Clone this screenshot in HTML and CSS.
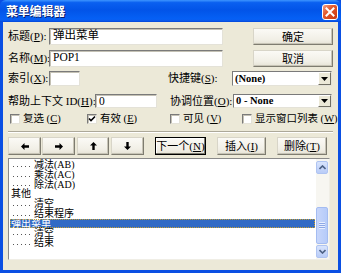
FILE: index.html
```html
<!DOCTYPE html>
<html>
<head>
<meta charset="utf-8">
<link rel="stylesheet" href="styles.css">
</head>
<body>
<div class="win">
  <div class="titlebar">
    <span class="title">菜单编辑器</span>
    <span class="close"><svg width="10" height="10" viewBox="0 0 10 10"><path d="M1.5 1.5 L8.5 8.5 M8.5 1.5 L1.5 8.5" stroke="#fff" stroke-width="2" stroke-linecap="square"/></svg></span>
  </div>
  <div class="body">
    <div class="row r1">
      <span class="lbl l-a">标题(<u>P</u>):</span>
      <span class="input in-long">弹出菜单</span>
      <span class="btn b-ok">确定</span>
    </div>
    <div class="row r2">
      <span class="lbl l-a">名称(<u>M</u>):</span>
      <span class="input in-long">POP1</span>
      <span class="btn b-ok">取消</span>
    </div>
    <div class="row r3">
      <span class="lbl l-a">索引(<u>X</u>):</span>
      <span class="input in-idx"></span>
      <span class="lbl l-key">快捷键(<u>S</u>):</span>
      <span class="combo"><span class="ctext">(None)</span><span class="dd"><svg width="7" height="4" viewBox="0 0 7 4"><path d="M0 0 H7 L3.5 4 Z" fill="#000"/></svg></span></span>
    </div>
    <div class="row r4">
      <span class="lbl l-help">帮助上下文 ID(<u>H</u>):</span>
      <span class="input in-help">0</span>
      <span class="lbl l-pos">协调位置(<u>O</u>):</span>
      <span class="combo c2"><span class="ctext">0 - None</span><span class="dd"><svg width="7" height="4" viewBox="0 0 7 4"><path d="M0 0 H7 L3.5 4 Z" fill="#000"/></svg></span></span>
    </div>
    <div class="row r5">
      <span class="chk k1"><span class="box"></span><span>复选 (<u>C</u>)</span></span>
      <span class="chk k2"><span class="box"><svg width="8" height="8" viewBox="0 0 8 8"><path d="M1 3.5 L3 5.5 L7 1.5" stroke="#000" stroke-width="1.6" fill="none"/></svg></span><span>有效 (<u>E</u>)</span></span>
      <span class="chk k3"><span class="box"></span><span>可见 (<u>V</u>)</span></span>
      <span class="chk k4"><span class="box"></span><span>显示窗口列表 (<u>W</u>)</span></span>
    </div>
    <div class="sep"></div>
    <div class="row r6">
      <span class="btn arr a1"><svg width="8" height="7" viewBox="0 0 8 7"><path d="M0 3.5 L3.5 0 V2.3 H8 V4.7 H3.5 V7 Z" fill="#000"/></svg></span>
      <span class="btn arr a2"><svg width="8" height="7" viewBox="0 0 8 7"><path d="M8 3.5 L4.5 0 V2.3 H0 V4.7 H4.5 V7 Z" fill="#000"/></svg></span>
      <span class="btn arr a3"><svg width="7" height="8" viewBox="0 0 7 8"><path d="M3.5 0 L0 3.5 H2.3 V8 H4.7 V3.5 H7 Z" fill="#000"/></svg></span>
      <span class="btn arr a4"><svg width="7" height="8" viewBox="0 0 7 8"><path d="M3.5 8 L0 4.5 H2.3 V0 H4.7 V4.5 H7 Z" fill="#000"/></svg></span>
      <span class="btn bnext">下一个(<u>N</u>)</span>
      <span class="btn bins">插入(<u>I</u>)</span>
      <span class="btn bdel">删除(<u>T</u>)</span>
    </div>
    <div class="list">
      <div class="items">
        <div class="it"><span class="dots"></span>减法(AB)</div>
        <div class="it"><span class="dots"></span>乘法(AC)</div>
        <div class="it"><span class="dots"></span>除法(AD)</div>
        <div class="it top">其他</div>
        <div class="it"><span class="dots"></span>清空</div>
        <div class="it"><span class="dots"></span>结束程序</div>
        <div class="it top sel">弹出菜单</div>
        <div class="it"><span class="dots"></span>清空</div>
        <div class="it"><span class="dots"></span>结束</div>
      </div>
      <div class="sbar">
        <span class="sbtn"><svg width="7" height="5" viewBox="0 0 7 5"><path d="M0.5 4 L3.5 1 L6.5 4" stroke="#4D6185" stroke-width="1.6" fill="none"/></svg></span>
        <span class="track"></span>
        <span class="thumb"><span class="grip"></span></span>
        <span class="sbtn"><svg width="7" height="5" viewBox="0 0 7 5"><path d="M0.5 1 L3.5 4 L6.5 1" stroke="#4D6185" stroke-width="1.6" fill="none"/></svg></span>
      </div>
    </div>
  </div>
</div>
</body>
</html>
```
FILE: styles.css
```css
* { box-sizing: border-box; }
html, body { margin: 0; padding: 0; }
body {
  width: 341px;
  height: 273px;
  overflow: hidden;
  font-family: "Liberation Serif", "Noto Sans CJK SC", serif;
  font-size: 11px;
  color: #000;
  background: #ECE9D8;
}
u { text-decoration: underline; text-underline-offset: 1px; }
.win {
  width: 341px;
  height: 273px;
  display: flex;
  flex-direction: column;
  background: #0A4FE3;
}
.titlebar {
  height: 22px;
  flex: none;
  display: flex;
  align-items: center;
  padding: 0 3px 0 6px;
  background: linear-gradient(to bottom, #3D95FF 0%, #0A60F0 12%, #0254E8 45%, #0560F5 85%, #0A5DF0 92%, #0346D8 100%);
  border-radius: 6px 6px 0 0;
}
.title {
  color: #fff;
  font-family: "Noto Sans CJK SC", sans-serif;
  font-weight: bold;
  font-size: 12px;
  line-height: 14px;
  letter-spacing: -0.2px;
  text-shadow: 1px 1px 0 #0A1E6C;
  flex: 1;
}
.close {
  width: 16px;
  height: 16px;
  border: 1px solid #fff;
  border-radius: 3px;
  background: linear-gradient(135deg, #F0A08A 0%, #E2582C 40%, #C8360E 100%);
  display: flex;
  align-items: center;
  justify-content: center;
  margin-top: 1px;
}
.body {
  flex: 1;
  margin: 0 3px 3px 3px;
  background: #ECE9D8;
  padding: 0 5px 0 5px;
  display: flex;
  flex-direction: column;
}
.row { display: flex; align-items: center; flex: none; }
.r1 { margin-top: 6px; height: 17px; }
.r2 { margin-top: 5px; height: 17px; }
.r3 { margin-top: 4px; height: 15px; }
.r4 { margin-top: 8px; height: 14px; }
.r5 { margin-top: 5px; height: 11px; }
.r6 { margin-top: 4px; height: 18px; }
.lbl {
  font-size: 11px;
  line-height: 13px;
  white-space: nowrap;
  flex: none;
}
.l-a { width: 41px; }
.l-key { width: 64px; margin-left: 88px; }
.l-help { width: 87px; }
.l-pos { width: 63px; margin-left: 13px; }
.input {
  background: #fff;
  border: 1px solid;
  border-color: #7A7A7A #E4E2D8 #E4E2D8 #7A7A7A;
  box-shadow: inset 1px 1px 0 #C4C1B4;
  height: 100%;
  padding: 0 3px;
  font-size: 11.5px;
  line-height: 13px;
  flex: none;
  white-space: nowrap;
  overflow: hidden;
}
.in-long { width: 174px; }
.in-idx { width: 31px; }
.in-help { width: 62px; }
.combo {
  width: 100px;
  height: 100%;
  background: #fff;
  border: 1px solid;
  border-color: #7A7A7A #E4E2D8 #E4E2D8 #7A7A7A;
  display: flex;
  align-items: center;
  justify-content: space-between;
  flex: none;
  padding-left: 2px;
}
.c2 { width: 99px; }
.ctext { font-size: 10.5px; line-height: 12px; font-weight: bold; font-family: "Liberation Serif", serif; }
.dd {
  width: 13px;
  height: 100%;
  background: #ECE9D8;
  border: 1px solid;
  border-color: #fff #716F64 #716F64 #fff;
  display: flex;
  align-items: center;
  justify-content: center;
}
.btn {
  display: flex;
  align-items: center;
  justify-content: center;
  height: 100%;
  background: linear-gradient(to bottom, #FBFAF6 0%, #F1EFE6 70%, #E6E3D6 100%);
  border: 1px solid;
  border-color: #D8D5C8 #7E7C70 #7E7C70 #D8D5C8;
  box-shadow: inset -1px -1px 0 #C7C4B6;
  font-size: 11px;
  line-height: 12px;
  white-space: nowrap;
  flex: none;
}
.b-ok { width: 80px; margin-left: auto; }
.arr { width: 33px; }
.a2 { margin-left: 1px; }
.a3 { margin-left: 2px; width: 32px; }
.a4 { margin-left: 2px; }
.bnext { width: 51px; margin-left: 11px; border: 1px solid #000; box-shadow: inset -1px -1px 0 #7E7C70, inset 1px 1px 0 #fff; }
.bins { width: 49px; margin-left: 11px; }
.bdel { width: 50px; margin-left: 11px; }
.chk { display: flex; align-items: center; flex: none; font-size: 10.5px; line-height: 12px; white-space: nowrap; }
.box {
  width: 10px; height: 10px;
  background: #fff;
  border: 1px solid;
  border-color: #7A7A7A #E4E2D8 #E4E2D8 #7A7A7A;
  box-shadow: inset 1px 1px 0 #C4C1B4;
  margin-right: 3px;
  display: flex; align-items: center; justify-content: center;
  flex: none;
}
.k1 { margin-left: 2px; width: 77px; }
.k2 { width: 83px; }
.k3 { width: 72px; }
.sep {
  flex: none;
  margin-top: 7px;
  height: 2px;
  border-top: 1px solid #ACA899;
  border-bottom: 1px solid #fff;
}
.list {
  flex: none;
  margin-top: 3px;
  width: 322px;
  height: 102px;
  background: #fff;
  border: 1px solid;
  border-color: #8A8A8A #F0EEE6 #F0EEE6 #8A8A8A;
  display: flex;
}
.items {
  flex: 1;
  padding: 1px 1px 0 1px;
  overflow: hidden;
}
.it {
  height: 9.75px;
  line-height: 9.75px;
  font-size: 10px;
  white-space: nowrap;
  display: flex;
  align-items: center;
  padding-left: 2px;
}
.it.top { padding-left: 1px; }
.dots {
  display: inline-block;
  width: 17px;
  height: 1px;
  margin: 3px 4px 0 1px;
  background-image: repeating-linear-gradient(to right, #555 0 1px, transparent 1px 4px);
}
.sel { background: #316AC5; color: #fff; outline: 1px dotted #C9A030; outline-offset: -1px; }
.sbar {
  width: 13px;
  flex: none;
  display: flex;
  flex-direction: column;
  background: #F7F6F1;
  padding: 2px 1px 1px 0;
}
.sbtn {
  height: 13px;
  flex: none;
  background: linear-gradient(to bottom, #D8E4FD, #B9CCF7);
  border: 1px solid #AFC4F2;
  border-radius: 2px;
  display: flex; align-items: center; justify-content: center;
}
.track { height: 33px; flex: none; }
.thumb {
  flex: 1;
  background: linear-gradient(to right, #C7D6FB, #B6CBF9);
  border: 1px solid #A4BCF1;
  border-radius: 2px;
  display: flex; align-items: center; justify-content: center;
  margin-bottom: 1px;
}
.grip {
  width: 6px; height: 7px;
  background-image: repeating-linear-gradient(to bottom, #E7EEFF 0 1px, #8EA8E6 1px 2px);
}
```
